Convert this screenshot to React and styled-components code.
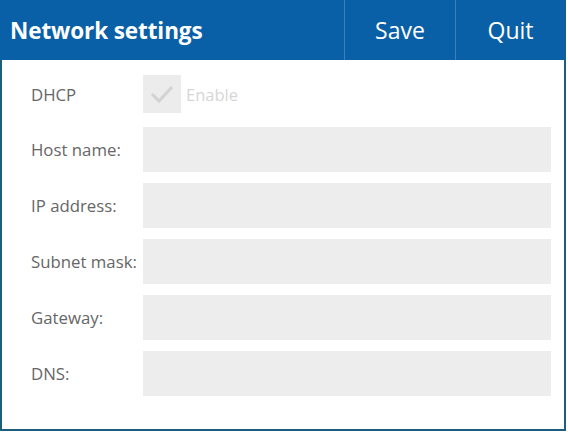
import React from "react";
import styled, { createGlobalStyle } from "styled-components";

const Global = createGlobalStyle`
  html, body { margin: 0; padding: 0; background: #fff; }
  body { font-family: "Open Sans", "Noto Sans", sans-serif; }
`;

const Window = styled.div`
  width: 566px;
  height: 431px;
  box-sizing: border-box;
  border-left: 2px solid #1c5e7c;
  border-right: 2px solid #1c5e7c;
  border-bottom: 2px solid #1c5e7c;
  background: #fff;
  display: flex;
  flex-direction: column;
`;

const Header = styled.div`
  height: 60px;
  margin: 0 -1px 0 -2px;
  background: #0a60a7;
  display: flex;
  align-items: stretch;
  color: #fff;
`;

const Title = styled.div`
  flex: 1;
  display: flex;
  align-items: center;
  padding-left: 10px;
  font-size: 22.5px;
  font-weight: 700;
  letter-spacing: -0.1px;
`;

const HeaderButton = styled.div`
  width: ${(p) => p.$w}px;
  display: flex;
  align-items: center;
  justify-content: center;
  border-left: 1px solid #3a80bb;
  font-size: 23px;
  font-weight: 400;
`;

const Form = styled.div`
  padding: 15px 11px 0 29px;
  display: flex;
  flex-direction: column;
  gap: 11px;
`;

const Row = styled.div`
  display: grid;
  grid-template-columns: 112px 408px;
  align-items: center;
  height: ${(p) => p.$h}px;
  margin-bottom: ${(p) => p.$mb || 0}px;
`;

const Label = styled.div`
  font-size: 16.8px;
  color: #666;
`;

const Field = styled.div`
  height: 45px;
  background: #ededed;
`;

const CheckWrap = styled.div`
  display: flex;
  align-items: center;
  gap: 5px;
`;

const CheckBox = styled.div`
  width: 38px;
  height: 38px;
  background: #ececec;
  display: flex;
  align-items: center;
  justify-content: center;
`;

const CheckText = styled.span`
  font-size: 16.5px;
  color: #d6d6d6;
`;

const fields = ["Host name:", "IP address:", "Subnet mask:", "Gateway:", "DNS:"];

export default function App() {
  return (
    <>
      <Global />
      <Window>
        <Header>
          <Title>Network settings</Title>
          <HeaderButton $w={110}>Save</HeaderButton>
          <HeaderButton $w={109}>Quit</HeaderButton>
        </Header>
        <Form>
          <Row $h={38} $mb={3}>
            <Label>DHCP</Label>
            <CheckWrap>
              <CheckBox>
                <svg width="26" height="22" viewBox="0 0 26 22">
                  <path d="M3 11 L10 18 L23 4" fill="none" stroke="#d2d2d2" strokeWidth="3" />
                </svg>
              </CheckBox>
              <CheckText>Enable</CheckText>
            </CheckWrap>
          </Row>
          {fields.map((f) => (
            <Row key={f} $h={45}>
              <Label>{f}</Label>
              <Field />
            </Row>
          ))}
        </Form>
      </Window>
    </>
  );
}
